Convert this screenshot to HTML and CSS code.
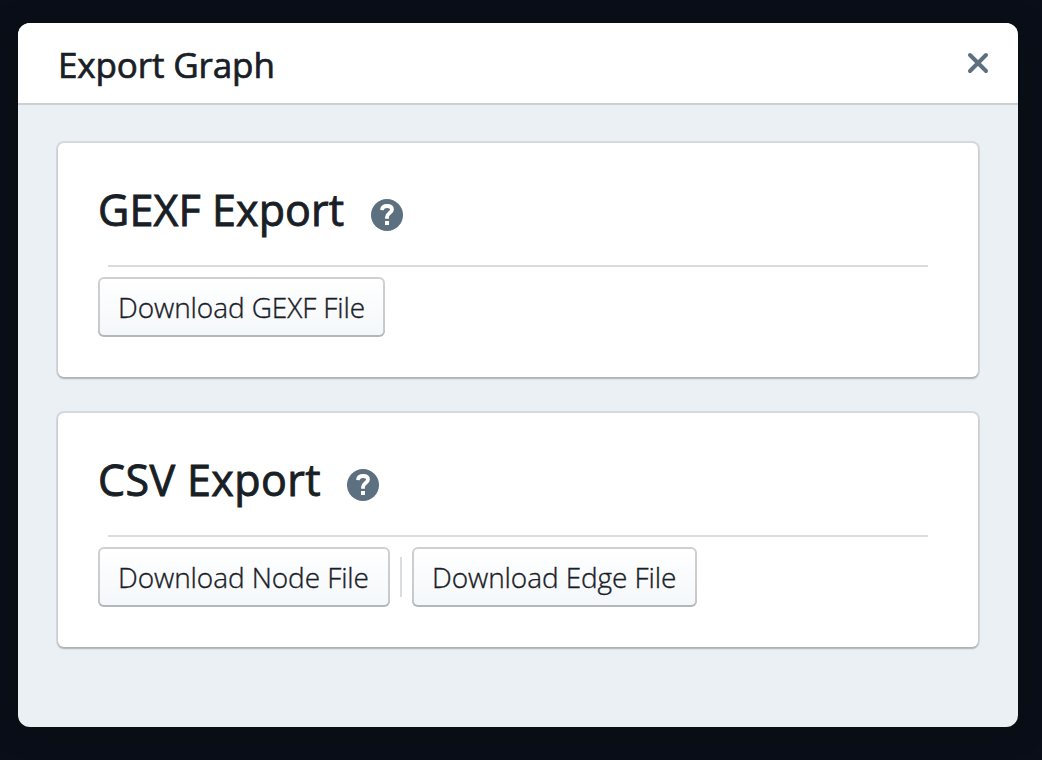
FILE: index.html
```html
<!DOCTYPE html>
<html lang="en">
<head>
<meta charset="utf-8">
<title>Export Graph</title>
<link rel="stylesheet" href="styles.css">
</head>
<body>
<main class="dialog">
  <header class="dialog-header">
    <h1 class="dialog-title">Export Graph</h1>
    <svg class="close" viewBox="0 0 22 22" width="22" height="22"><path d="M3 3L19 19M19 3L3 19"/></svg>
  </header>
  <div class="dialog-body">
    <section class="card">
      <div class="card-head">
        <h2 class="heading gexf">GEXF Export</h2>
        <svg class="help" viewBox="0 0 16 16" width="32" height="32"><circle cx="8" cy="8" r="8"/><path class="mark" d="M5.5 5.6C5.6 4.1 6.5 3.5 8.1 3.5c1.6 0 2.4.8 2.4 1.8 0 1.6-2.5 1.9-2.5 3.7v.9"/><rect class="dot" x="7" y="11" width="2" height="2"/></svg>
      </div>
      <div class="divider"></div>
      <div class="actions"><button class="button b1"><span>Download GEXF File</span></button></div>
    </section>
    <section class="card">
      <div class="card-head">
        <h2 class="heading csv">CSV Export</h2>
        <svg class="help" viewBox="0 0 16 16" width="32" height="32"><circle cx="8" cy="8" r="8"/><path class="mark" d="M5.5 5.6C5.6 4.1 6.5 3.5 8.1 3.5c1.6 0 2.4.8 2.4 1.8 0 1.6-2.5 1.9-2.5 3.7v.9"/><rect class="dot" x="7" y="11" width="2" height="2"/></svg>
      </div>
      <div class="divider"></div>
      <div class="actions"><button class="button b2"><span>Download Node File</span></button><div class="separator"></div><button class="button b3"><span>Download Edge File</span></button></div>
    </section>
  </div>
</main>
</body>
</html>
```
FILE: styles.css
```css
* { box-sizing: border-box; }
body {
  margin: 0;
  height: 760px;
  padding: 23px 24px 33px 18px;
  overflow: hidden;
  background: #090e18;
  color: #182026;
  font-family: "Open Sans", "Noto Sans", sans-serif;
}
.dialog {
  width: 1000px;
  height: 704px;
  border-radius: 12px;
  background: #ebf0f4;
  box-shadow: 0 4px 24px rgba(12, 16, 18, .8);
  overflow: hidden;
}
.dialog-header {
  display: flex;
  align-items: center;
  justify-content: space-between;
  height: 82px;
  padding: 0 29px 2px 40px;
  background: #fff;
  border-bottom: 2px solid #cbd0d3;
}
.dialog-title {
  margin: 5px 0 0;
  font-size: 35px;
  line-height: 40px;
  font-weight: 400;
  letter-spacing: -.12px;
  -webkit-text-stroke: .7px #182026;
  white-space: nowrap;
}
.close { fill: none; stroke: #5c7080; stroke-width: 4; stroke-linecap: round; margin-top: 2px; }
.dialog-body { display: flex; flex-direction: column; gap: 36px; padding: 38px 40px; }
.card {
  height: 234px;
  padding: 40px;
  border-radius: 6px;
  background: #fff;
  box-shadow: 0 0 0 2px rgba(16, 22, 26, .1), 0 2px 2px rgba(16, 22, 26, .2);
}
.card-head { display: flex; align-items: center; height: 72px; margin-bottom: 10px; }
.heading {
  margin: 0;
  padding-bottom: 18px;
  font-size: 43px;
  line-height: 56px;
  font-weight: 400;
  -webkit-text-stroke: .9px #182026;
  white-space: nowrap;
}
.gexf { width: 273px; letter-spacing: .13px; }
.csv { width: 249px; letter-spacing: .4px; }
.help { display: block; margin-bottom: 8px; fill: #5c7080; }
.mark { fill: none; stroke: #fff; stroke-width: 1.9; }
.dot { fill: #fff; }
.divider { height: 2px; margin: 0 10px 10px; background: #dbdcdd; }
.actions { display: flex; align-items: center; }
.button {
  height: 60px;
  padding: 0 0 0 20px;
  border: 0;
  border-radius: 6px;
  background: linear-gradient(#fff, #f4f7fa);
  box-shadow: inset 0 0 0 2px rgba(16, 22, 26, .2), inset 0 -2px 0 rgba(16, 22, 26, .1);
  color: #182026;
  font: 300 28px/40px "Open Sans", "Noto Sans", sans-serif;
  letter-spacing: -.09px;
  -webkit-text-stroke: .35px #182026;
  text-align: left;
  white-space: nowrap;
}
.b1 { width: 287px; }
.b2 { width: 292px; }
.b3 { width: 285px; }
.separator { width: 2px; height: 40px; margin: 0 10px; background: #dbdcdd; }
```
